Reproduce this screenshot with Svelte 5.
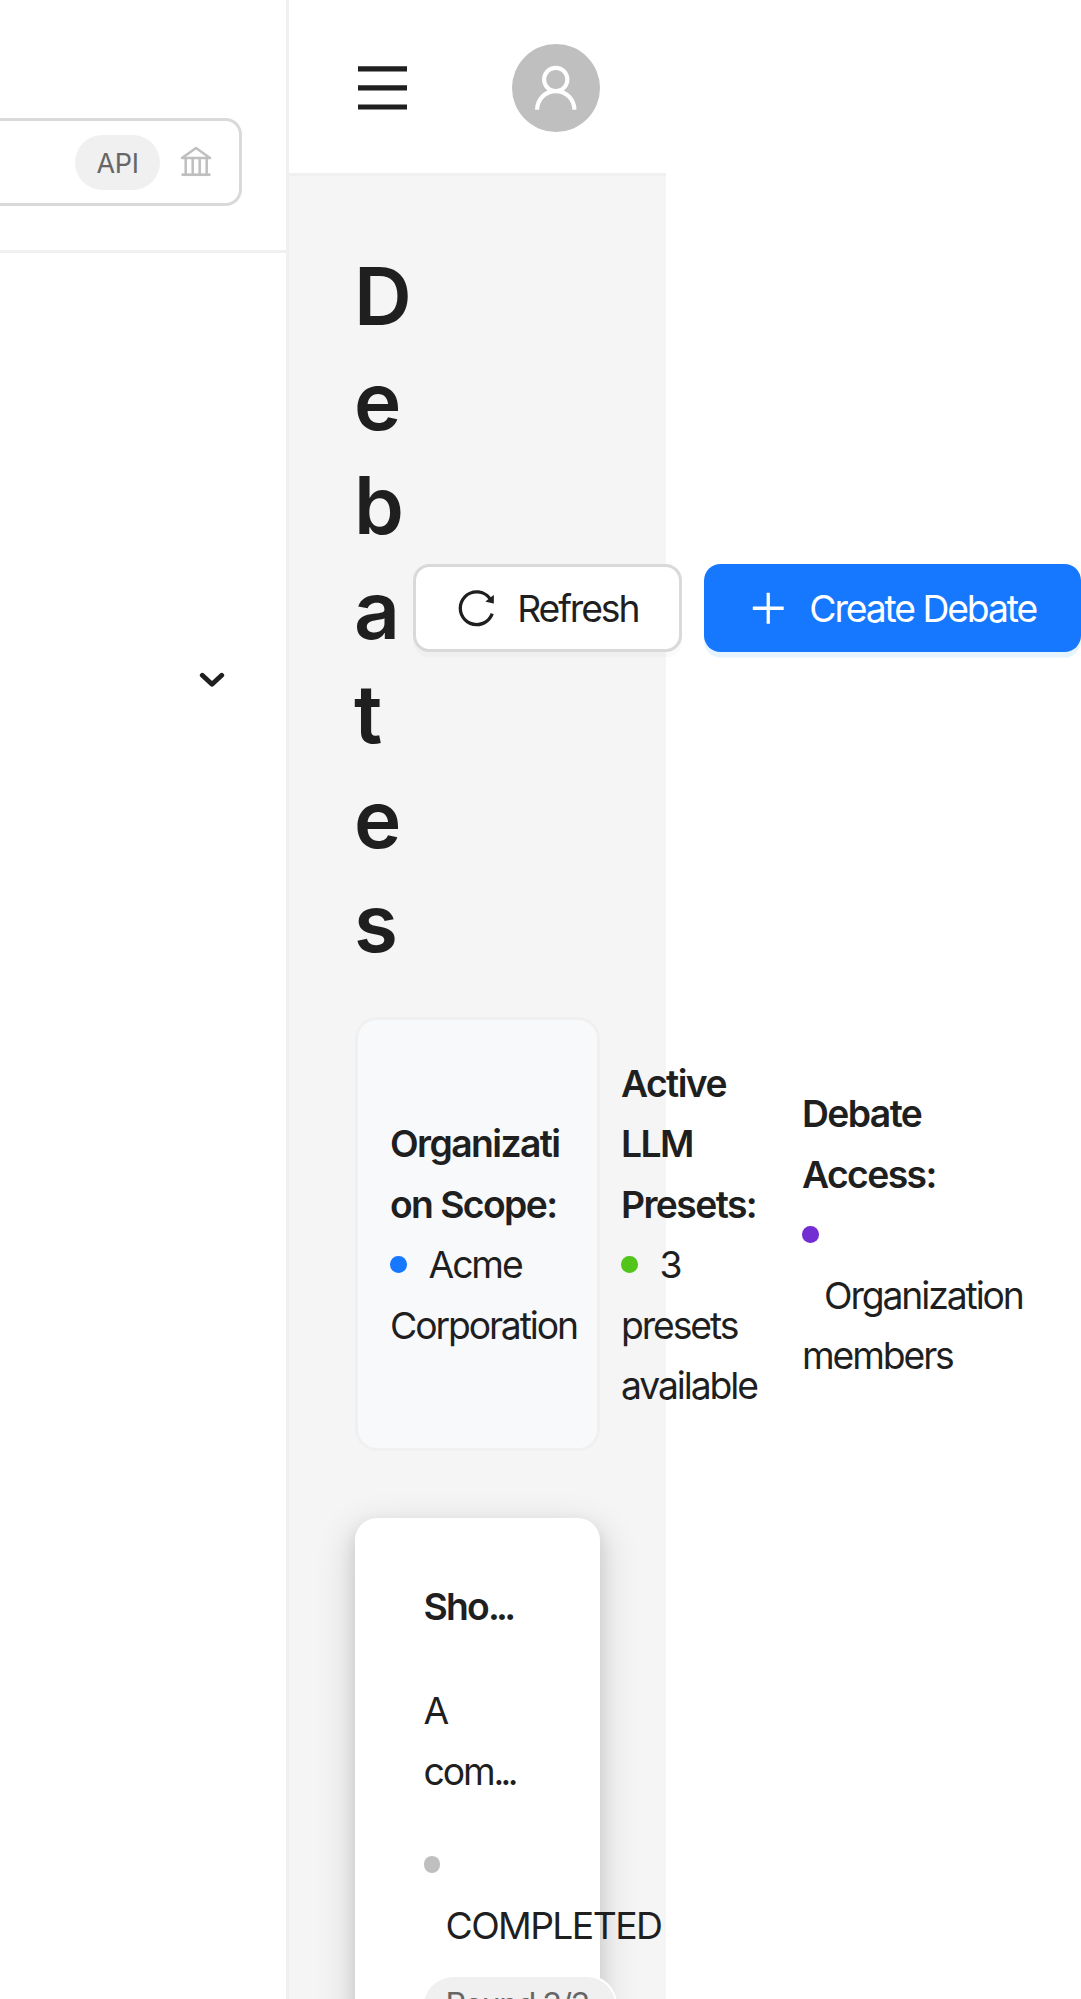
<script>
  const title = 'Debates'.split('');
</script>

<div class="app">
  <aside class="sider">
    <div class="search-area">
      <div class="search">
        <span class="tag">API</span>
        <svg class="bank" viewBox="0 0 34 34" fill="none" stroke="currentColor" stroke-width="2.500"><path d="M3 13L17 3l14 10z" stroke-linejoin="round" /><path d="M6.700 13v16M13.700 13v16M20.700 13v16M27.700 13v16" /><path d="M2.500 29.700h29" stroke-width="2.700" /></svg>
      </div>
    </div>
    <div class="group">
      <svg class="chevron" viewBox="0 0 26 16" fill="none" stroke="#1f1f1f" stroke-width="4.900" stroke-linecap="round"><path d="M3.300 3.300l9.700 8.900M22.700 3.300L13 12.200" /></svg>
    </div>
  </aside>

  <div class="main">
    <header>
      <svg class="menu" viewBox="0 0 49 44" fill="#1f1f1f"><path d="M0 .2h49v5.200H0zM0 19.300h49v5.200H0zM0 38.400h49v5.200H0z" /></svg>
      <span class="avatar">
        <svg viewBox="64 64 896 896" fill="currentColor"><path d="M858.500 763.600a374 374 0 00-80.600-119.500 375.630 375.630 0 00-119.500-80.600c-.4-.2-.8-.3-1.200-.5C719.500 518 760 444.700 760 362c0-137-111-248-248-248S264 225 264 362c0 82.700 40.500 156 102.800 201.100-.4.2-.8.3-1.200.5-44.800 18.900-85 46-119.500 80.600a375.630 375.630 0 00-80.600 119.500A371.700 371.700 0 00136 901.800a8 8 0 008 8.200h60c4.400 0 7.900-3.500 8-7.800 2-77.200 33-149.500 87.800-204.300 56.700-56.700 132-87.900 212.200-87.900s155.500 31.200 212.200 87.900C779 752.700 810 825 812 902.200c.1 4.400 3.600 7.800 8 7.800h60a8 8 0 008-8.200c-1-47.800-10.900-94.300-29.500-138.200zM512 534c-45.900 0-89.100-17.900-121.600-50.400S340 407.900 340 362c0-45.900 17.900-89.100 50.400-121.600S466.100 190 512 190s89.100 17.900 121.600 50.400S684 316.100 684 362c0 45.900-17.900 89.100-50.400 121.600S557.900 534 512 534z" /></svg>
      </span>
    </header>

    <section class="content">
      <div class="titlebar">
        <h1>{#each title as letter}<span>{letter}</span>{/each}</h1>
        <div class="actions">
          <button class="refresh">
            <svg viewBox="64 64 896 896" fill="currentColor"><path d="M909.100 209.300l-56.400 44.100C775.800 155.100 656.200 92 521.900 92 290 92 102.300 279.500 102 511.500 101.700 743.700 289.800 932 521.900 932c181.300 0 335.800-115 394.600-276.100 1.500-4.200-.7-8.900-4.900-10.300l-56.700-19.500a8 8 0 00-10.100 4.800c-1.800 5-3.800 10-5.900 14.900-17.300 41-42.100 77.800-73.700 109.400A344.770 344.770 0 01655.900 829c-42.300 17.900-87.400 27-133.800 27-46.500 0-91.500-9.100-133.800-27A341.500 341.500 0 01279 755.200a342.160 342.160 0 01-73.700-109.400c-17.900-42.400-27-87.400-27-133.900s9.100-91.500 27-133.900c17.300-41 42.100-77.800 73.700-109.400 31.600-31.600 68.400-56.400 109.300-73.800 42.300-17.900 87.400-27 133.800-27 46.500 0 91.500 9.100 133.800 27a341.500 341.500 0 01109.300 73.800c9.900 9.900 19.200 20.400 27.800 31.400l-60.200 47a8 8 0 003 14.100l175.600 43c5 1.200 9.900-2.600 9.900-7.700l.8-180.900c-.1-6.600-7.800-10.300-13-6.200z" /></svg>
            <span>Refresh</span>
          </button>
          <button class="create">
            <svg viewBox="64 64 896 896" fill="currentColor"><path d="M482 152h60q8 0 8 8v704q0 8-8 8h-60q-8 0-8-8V160q0-8 8-8z" /><path d="M160 474h704q8 0 8 8v60q0 8-8 8H160q-8 0-8-8v-60q0-8 8-8z" /></svg>
            <span>Create Debate</span>
          </button>
        </div>
      </div>

      <div class="scope">
        <div class="col one">
          <strong>Organizati<br />on Scope:</strong>
          <div><i class="dot blue"></i><span class="label">Acme</span></div>
          <div>Corporation</div>
        </div>
        <div class="col two">
          <strong>Active<br />LLM<br />Presets:</strong>
          <div><i class="dot green"></i><span class="label">3</span></div>
          <div>presets<br />available</div>
        </div>
        <div class="col three">
          <strong>Debate<br />Access:</strong>
          <div><i class="dot purple"></i></div>
          <div class="indent">Organization</div>
          <div>members</div>
        </div>
      </div>

      <article class="debate">
        <strong class="name">Sho<span class="more">...</span></strong>
        <p>A<br />com<span class="more">...</span></p>
        <div class="status"><i class="dot grey"></i></div>
        <div class="indent state">COMPLETED</div>
        <span class="round">Round 3/3</span>
      </article>
    </section>
  </div>
</div>

<style>
  :global(body) { background: #fff; overflow: hidden; }
  .app {
    display: flex;
    width: 1081px;
    height: 1999px;
    overflow: hidden;
    font-family: Inter, sans-serif;
    font-size: 37.300px;
    line-height: 60.500px;
    letter-spacing: -2.100px;
    color: #1f1f1f;
  }
  .app * { box-sizing: border-box; }
  .sider {
    flex: none;
    width: 289px;
    border-right: 3px solid #f0f0f0;
  }
  .search-area {
    height: 253px;
    padding-top: 118px;
    border-bottom: 3px solid #f0f0f0;
  }
  .search {
    display: flex;
    align-items: center;
    justify-content: flex-end;
    gap: 19px;
    width: 242px;
    height: 88px;
    padding-right: 26px;
    border: 3px solid #d9d9d9;
    border-left: 0;
    border-radius: 0 16.500px 16.500px 0;
  }
  .tag {
    width: 85px;
    height: 55px;
    border-radius: 28px;
    background: #f0f0f0;
    color: #666;
    font-size: 27px;
    line-height: 57px;
    letter-spacing: -0.300px;
    text-align: center;
  }
  .bank { width: 34px; height: 34px; color: #bfbfbf; }
  .group { padding: 419px 0 0 199px; }
  .chevron { display: block; width: 26px; height: 16px; }
  .main {
    flex: none;
    width: 377px;
    background: #f5f5f5;
  }
  header {
    display: flex;
    align-items: center;
    justify-content: space-between;
    height: 176px;
    padding: 3px 66px 0 69px;
    background: #fff;
    border-bottom: 3px solid #f0f0f0;
  }
  .menu { width: 49px; height: 44px; }
  .avatar {
    display: grid;
    place-items: center;
    width: 88px;
    height: 88px;
    border-radius: 50%;
    background: #bfbfbf;
    color: #fff;
  }
  .avatar svg { width: 49.500px; height: 49.500px; }
  .content { padding: 68px 66px 0; }
  .titlebar { display: flex; align-items: center; height: 731.500px; }
  h1 {
    flex: none;
    width: 59px;
    margin: 0 0 0 -1px;
    font-size: 80px;
    line-height: 104.500px;
    font-weight: 620;
    letter-spacing: 0;
  }
  h1 span { display: block; }
  .actions { flex: none; display: flex; gap: 22px; margin-top: -3px; }
  button {
    display: flex;
    align-items: center;
    justify-content: center;
    gap: 22px;
    height: 88px;
    padding: 0;
    border: 0;
    border-radius: 16.500px;
    font: inherit;
    letter-spacing: inherit;
    white-space: nowrap;
  }
  button svg { width: 38.500px; height: 38.500px; }
  button span { padding-top: 2px; }
  .refresh {
    width: 269px;
    border: 3px solid #d9d9d9;
    background: #fff;
    color: #1f1f1f;
    box-shadow: 0 5.500px 0 rgba(0, 0, 0, 0.020);
  }
  .create {
    width: 377px;
    background: #1677ff;
    color: #fff;
    box-shadow: 0 5.500px 0 rgba(5, 145, 255, 0.100);
  }
  .scope {
    display: flex;
    align-items: center;
    width: 245px;
    height: 434.500px;
    margin-top: 41px;
    padding: 3px 0 0 32px;
    border: 3px solid #f0f0f0;
    border-radius: 22px;
    background: #f7f9fb;
    white-space: nowrap;
  }
  .col { flex: none; }
  .one { width: 231px; }
  .two { width: 181px; }
  strong { display: block; font-weight: 600; letter-spacing: -1.600px; }
  .dot {
    display: inline-block;
    width: 16.500px;
    height: 16.500px;
    border-radius: 50%;
    vertical-align: 5.500px;
  }
  .blue { background: #1677ff; }
  .green { background: #52c41a; }
  .purple { background: #722ed1; }
  .grey { background: #bfbfbf; }
  .label { margin-left: 22px; }
  .indent { padding-left: 22px; }
  .debate {
    width: 244.500px;
    height: 700px;
    margin-top: 67px;
    padding: 59px 0 0 68.500px;
    border-radius: 22px;
    background: #fff;
    white-space: nowrap;
    box-shadow:
      0 2.750px 5.500px -5.500px rgba(0, 0, 0, 0.160),
      0 8.250px 16.500px rgba(0, 0, 0, 0.120),
      0 13.750px 33px 11px rgba(0, 0, 0, 0.090);
  }
  .name { letter-spacing: -1.800px; }
  .more { letter-spacing: -3.700px; }
  .state { letter-spacing: -1.600px; }
  p { margin: 43.500px 0 33px; }
  .round {
    display: block;
    width: 193px;
    height: 60px;
    margin-top: 18.500px;
    padding-left: 22px;
    border: 2.750px solid #fff;
    border-left: 0;
    border-radius: 30px;
    background: #f0f0f0;
    color: #666;
    font-size: 32px;
    line-height: 56px;
    letter-spacing: -1.500px;
  }
</style>
